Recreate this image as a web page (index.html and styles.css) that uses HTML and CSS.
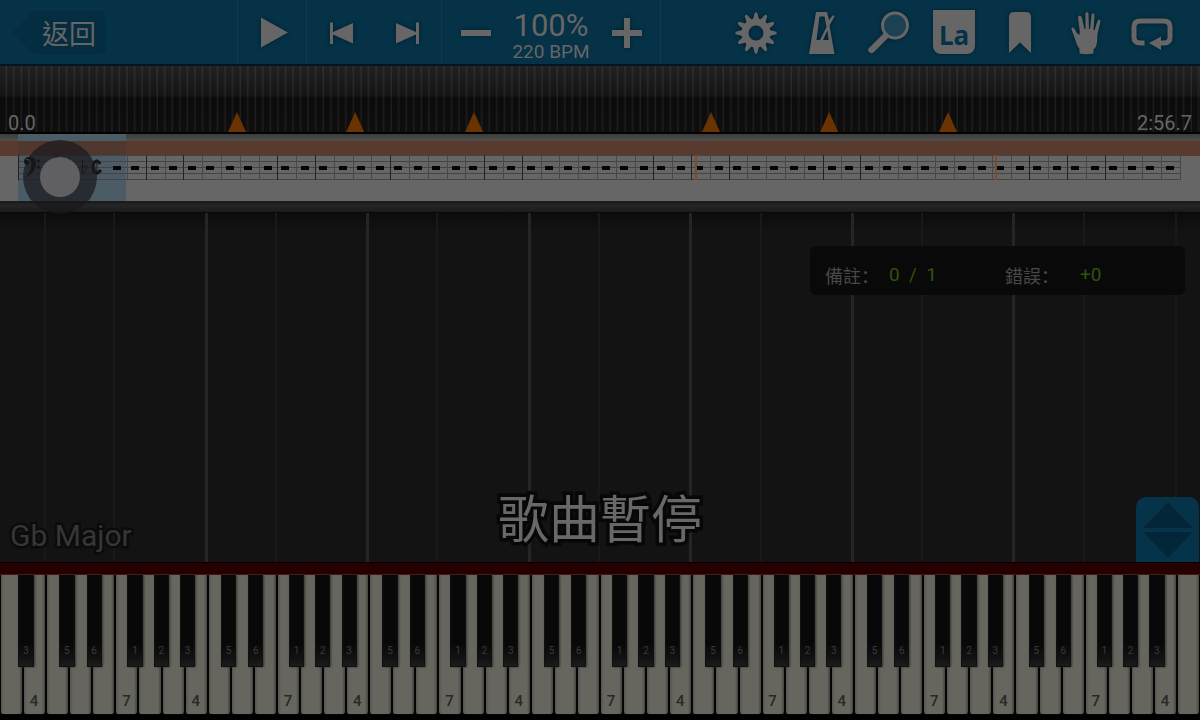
FILE: index.html
```html
<!DOCTYPE html>
<html lang="zh-Hant">
<head>
<meta charset="utf-8">
<meta name="viewport" content="width=device-width, initial-scale=1">
<title>Gb Major</title>
<link rel="stylesheet" href="styles.css">
</head>
<body>
<div class="app">
  <header class="toolbar">
    <div class="group group-back">
      <button class="back" type="button">
        <svg class="back-shape" viewBox="0 0 98 48" aria-hidden="true"><path d="M1 23.500 21 3Q23 1 26 1H89Q97 1 97 9V38Q97 46 89 46H26Q23 46 21 44Z"/></svg>
        <span class="back-label">返回</span>
      </button>
    </div>
    <div class="group">
      <button class="tool" type="button" aria-label="播放"><svg class="icon" viewBox="0 0 48 48"><path d="M13 8.500 40 23.500 13 38.500Z"/></svg></button>
    </div>
    <div class="group">
      <button class="tool" type="button" aria-label="上一小節"><svg class="icon" viewBox="0 0 48 48"><path d="M13 13.500h3v9.500L36 14v20.500L16 25.500V35h-3Z"/></svg></button>
      <button class="tool" type="button" aria-label="下一小節"><svg class="icon" viewBox="0 0 48 48"><path d="M35 13.500h-3v9.500L12 14v20.500l20-9V35h3Z"/></svg></button>
    </div>
    <div class="group tempo">
      <button class="tool" type="button" aria-label="減慢"><svg class="icon" viewBox="0 0 48 48"><path d="M10 21h30v6H10Z"/></svg></button>
      <div class="tempo-text"><span class="percent">100%</span><span class="bpm">220 BPM</span></div>
      <button class="tool" type="button" aria-label="加快"><svg class="icon" viewBox="0 0 48 48"><path d="M21 9h6v12h12v6H27v12h-6V27H9v-6h12Z"/></svg></button>
    </div>
    <nav class="group tools">
      <button class="tool" type="button" aria-label="設定"><svg class="icon" viewBox="0 0 48 48"><g id="teeth"><path id="tooth" d="M20.800 11 22.700 4Q24 2.500 25.300 4L27.200 11Z"/><use href="#tooth" transform="rotate(30 24 24)"/><use href="#tooth" transform="rotate(60 24 24)"/></g><use href="#teeth" transform="rotate(90 24 24)"/><use href="#teeth" transform="rotate(180 24 24)"/><use href="#teeth" transform="rotate(270 24 24)"/><path fill-rule="evenodd" d="M24 9.500a14.500 14.500 0 1 0 0 29 14.500 14.500 0 0 0 0-29Zm0 7a7.500 7.500 0 1 1 0 15 7.500 7.500 0 0 1 0-15Z"/></svg></button>
      <button class="tool" type="button" aria-label="節拍器"><svg class="icon" viewBox="0 0 48 48"><path fill-rule="evenodd" d="M18 3h11l2 8 4-5 1.500 1.500-5 9L36.500 45H11Zm3.500 4.500L18.500 31h3.500l6.500-13-2-10.500Zm8 14L25 31h5.500Z"/></svg></button>
      <button class="tool" type="button" aria-label="放大"><svg class="icon icon-lens" viewBox="0 0 48 48"><circle class="lens" cx="29" cy="16.500" r="12.500"/><path d="m18 24 4.500 4.500L7.500 43.500Q5 45 3 43T3 39Z"/></svg></button>
      <button class="tool" type="button" aria-label="音名"><span class="la">La</span></button>
      <button class="tool" type="button" aria-label="書籤"><svg class="icon" viewBox="0 0 48 48"><path d="M13 44V8Q13 3 18 3h12q5 0 5 5v36L24 33.500Z"/></svg></button>
      <button class="tool" type="button" aria-label="手"><svg class="icon" viewBox="0 0 48 48"><path d="M17.500 44.500V40q-3-4-4.500-10L9.500 20.500Q9 18 11 18.500q1.500.5 3.500 5l3 2.500.2-4-1.700-13q0-2.500 1.500-2.500T20 9l2.500 11h1L23.400 5q.2-2 1.600-2t1.500 2l.5 15h1L29.500 6q.5-2 1.800-1.700T32.500 7l-1 14h1l3-9q.7-2 2-1.500t.8 3L35.500 25 35 34q-.5 4-3.500 6.500v4Q24 46 17.500 44.500Z"/></svg></button>
      <button class="tool" type="button" aria-label="循環"><svg class="icon" viewBox="0 0 48 48"><path class="loop" d="M16.500 34H12Q6 34 6 28V18Q6 12 12 12H36Q42 12 42 18V28Q42 34 36 34H32"/><path d="M21 34 33 27.500V41Z"/></svg></button>
    </nav>
  </header>

  <section class="timeline" aria-label="時間軸">
    <span class="time">0.0</span>
    <span class="time">2:56.7</span>
    <i class="marker" style="left:19.75%"></i>
    <i class="marker" style="left:29.6%"></i>
    <i class="marker" style="left:39.5%"></i>
    <i class="marker" style="left:59.25%"></i>
    <i class="marker" style="left:69.1%"></i>
    <i class="marker" style="left:79%"></i>
  </section>

  <section class="sheet" aria-label="樂譜">
    <svg class="score" id="score" viewBox="0 0 1200 67" preserveAspectRatio="none">
      <rect class="current" x="18" y="0" width="108" height="67"/>
      <rect class="loop-band" x="0" y="7" width="1200" height="15"/>
      <rect class="loop-current" x="18" y="7" width="108" height="15"/>
      <g id="staff"></g>
      <g class="ink">
        <path d="M24 27C25 21 36 21 36 29 36 37 30 41 25 44 30 38 32 34 31 28 30 24 27 24 26 26 30 26 30 31 27 31 25 31 24 29 24 27Z"/>
        <circle cx="38.500" cy="27" r="1.500"/><circle cx="38.500" cy="33" r="1.500"/>
        <path class="pen" d="M56 20v16M69 23v16M82.500 26v13.500c8-7 4-10 0-6"/>
        <path class="pen common" d="M100 30c-2-5-7-3-7 3s4 8 8 3"/>
        <path class="pen" d="M97 25v16"/>
      </g>
    </svg>
    <div class="scrubber"></div>
  </section>
  <div class="ledge"></div>

  <main class="roll">
    <div class="lanes" id="lanes"></div>
    <dl class="stats">
      <dt lang="zh-Hans">備註：</dt><dd>0  /  1</dd>
      <dt lang="zh-Hans">錯誤：</dt><dd>+0</dd>
    </dl>
    <p class="key-name">Gb Major</p>
    <p class="paused">歌曲暫停</p>
    <button class="resize" type="button" aria-label="調整鍵盤"><svg class="resize-icon" viewBox="0 0 52 58"><path d="M26 1 51 27H1ZM1 31H51L26 57Z"/></svg></button>
  </main>
  <div class="felt"></div>
  <ul class="piano" id="piano" aria-label="鋼琴"></ul>
</div>
<script src="piano.js"></script>
</body>
</html>
```
FILE: styles.css
```css
* { box-sizing: border-box; }
body { margin: 0; background: #000; color: #666; font-family: Roboto, "Noto Sans CJK TC", sans-serif; }
button { margin: 0; padding: 0; border: 0; background: none; color: inherit; font: inherit; cursor: pointer; }
.app { display: flex; flex-direction: column; min-height: 100vh; overflow: hidden; }

.toolbar { display: grid; grid-template-columns: 238px 69px 135px 219px 1fr; height: 66px; background: #053247; border-bottom: 2px solid #021620; }
.group { display: flex; align-items: center; justify-content: space-around; border-right: 1px solid #12394b; padding-top: 2px; }
.group-back { justify-content: flex-start; padding-left: 10px; }
.back { display: grid; align-items: center; width: 98px; height: 48px; }
.back-shape, .back-label { grid-area: 1 / 1; }
.back-shape { width: 98px; height: 48px; fill: #052d41; stroke: #08364b; stroke-width: 1; }
.back-label { padding: 4px 0 0 20px; font-size: 27px; line-height: 32px; }
.tool { display: grid; place-items: center; width: 66px; height: 60px; }
.icon { width: 48px; height: 48px; fill: #666; filter: drop-shadow(0 0 2px #021c29); }
.icon-lens { margin-left: 4px; }
.lens { fill: #1c4054; stroke: #666; stroke-width: 3; }
.loop { fill: none; stroke: #666; stroke-width: 5; }
.la { display: grid; place-items: center; width: 42px; height: 44px; margin-bottom: 2px; padding-top: 6px; background: #666; border-radius: 0 0 8px 8px; color: #053247; font: bold 26px/30px "Noto Sans", sans-serif; box-shadow: 0 0 3px #021c29; }
.tempo-text { display: flex; flex-direction: column; align-items: center; width: 84px; padding-top: 5px; }
.percent { font-size: 31px; line-height: 32px; }
.bpm { font-size: 19px; line-height: 20px; }
.tools { justify-content: flex-end; padding-right: 15px; border-right: 0; }

.timeline { position: relative; display: flex; align-items: flex-end; justify-content: space-between; height: 68px; padding: 0 8px; border-bottom: 2px solid #020202;
  background: repeating-linear-gradient(90deg, transparent 0, transparent calc(100% / 159 - 3px), rgb(255 255 255 / .07) calc(100% / 159 - 1px), transparent calc(100% / 159)), linear-gradient(#212121, #141414 30px, #0b0b0b 31px, #0e0e0e); }
.time { font-size: 20px; line-height: 18px; }
.marker { position: absolute; bottom: 0; width: 18px; height: 20px; margin-left: -9px; background: #6b3300; clip-path: polygon(50% 0, 100% 100%, 0 100%); }

.sheet { position: relative; height: 67px; background: linear-gradient(#3c3c3a, #50504e 7px, #666 8px); }
.score { display: block; width: 100%; height: 67px; }
.current { fill: #4c5c67; }
.loop-band { fill: #593a2e; }
.loop-current { fill: #50382f; }
.line { fill: #444; }
.bar { fill: #484848; }
.bar-strong { fill: #222; }
.rest { fill: #050505; }
.repeat { fill: #7c4c30; }
.ink { fill: #111; }
.pen { fill: none; stroke: #151515; stroke-width: 1; }
.common { stroke-width: 3; }
.scrubber { position: absolute; left: 23px; top: 6px; z-index: 2; width: 74px; height: 74px; border: 17px solid rgb(24 24 29 / .7); border-radius: 50%; background: #606063; background-clip: padding-box; }
.ledge { height: 12px; background: linear-gradient(#171918, #242524 4px, #1b1b1b); border-bottom: 1px solid #080808; }

.roll { position: relative; flex: 1; display: grid; grid-template-columns: 1fr auto 1fr; align-items: end; min-height: 250px; background: linear-gradient(#0c0c0c, #131313 20px); }
.lanes { position: absolute; inset: 0; }
.lane { position: absolute; top: 0; bottom: 0; width: 2px; margin-left: -2px; background: #191919; }
.lane-octave { width: 3px; margin-left: -3px; background: #252525; }
.stats { position: absolute; top: 33px; right: 15px; display: grid; grid-template-columns: 64px 116px 75px 1fr; align-items: center; width: 375px; height: 49px; margin: 0; padding: 9px 0 0 15px; border-radius: 6px; background: #090909; font-size: 18px; line-height: 24px; color: #484848; }
.stats dt { font-family: "Noto Sans CJK SC", sans-serif; }
.stats dd { margin: 0; color: #31510f; font-size: 19px; white-space: pre; }
.key-name { position: relative; margin: 0; padding: 0 0 9px 10px; font-size: 30px; line-height: 34px; color: #363636; -webkit-text-stroke: 5px #0b0b0b; paint-order: stroke fill; }
.paused { position: relative; margin: 0; padding-bottom: 11px; font-size: 51px; line-height: 60px; color: #686868; -webkit-text-stroke: 7px #070707; paint-order: stroke fill; }
.resize { position: relative; justify-self: end; display: grid; place-items: center; width: 63px; height: 65px; margin-right: 1px; border-radius: 10px 10px 0 0; background: #05344a; }
.resize-icon { width: 52px; height: 58px; fill: #032738; }

.felt { height: 13px; background: #260000; border-top: 1px solid #090000; border-bottom: 1px solid #441616; }
.piano { display: flex; height: 145px; margin: 0; padding: 0 0 5px; list-style: none; background: #000; }
.key { position: relative; flex: 1 1 0; min-width: 0; }
.white { display: flex; align-items: flex-end; justify-content: center; width: 100%; height: 140px; padding: 0 1px 3px 0; border: 1px solid #050505; border-top: 0; border-radius: 0 0 3px 3px; background: linear-gradient(90deg, #55544e, #66655e 3px, #66655e calc(100% - 3px), #44433e); color: #282826; font-size: 15px; line-height: 20px; font-weight: 500; }
.black { position: absolute; top: 0; z-index: 1; display: flex; align-items: flex-end; justify-content: center; width: 66%; height: 92px; padding-bottom: 7px; border: 1px solid #101010; border-top: 0; background: linear-gradient(#080808 75%, #111 90%, #1b1b1b); box-shadow: 1px 0 2px #35342f; color: #3a3a3a; font-size: 10px; line-height: 16px; }
.black-c { left: 57%; }
.black-d { left: 75%; }
.black-f { left: 52%; }
.black-g { left: 66%; }
.black-a { left: 80%; }
```
FILE: piano.js
```js
const piano = document.getElementById('piano');
const lanes = document.getElementById('lanes');
const names = ['a', 'b', 'c', 'd', 'e', 'f', 'g'];
const sharps = { c: 5, d: 6, f: 1, g: 2, a: 3 };
const naturals = { b: 4, f: 7 };
const WHITE_KEYS = 52;

for (let i = 0; i < WHITE_KEYS; i++) {
  const name = names[i % 7];
  const key = document.createElement('li');
  key.className = 'key';
  const white = document.createElement('button');
  white.type = 'button';
  white.className = 'white';
  white.setAttribute('aria-label', name.toUpperCase());
  white.textContent = naturals[name] || '';
  key.append(white);
  if (sharps[name] && i < WHITE_KEYS - 1) {
    const black = document.createElement('button');
    black.type = 'button';
    black.className = 'black black-' + name;
    black.textContent = sharps[name];
    key.append(black);
  }
  piano.append(key);

  if (name === 'c' || name === 'f') {
    const lane = document.createElement('i');
    const inner = i > 2 && i < WHITE_KEYS - 1;
    lane.className = name === 'c' && inner ? 'lane lane-octave' : 'lane';
    lane.style.left = (i / WHITE_KEYS * 100) + '%';
    lanes.append(lane);
  }
}

const staff = document.getElementById('staff');
function rect(cls, x, y, width, height) {
  const el = document.createElementNS('http://www.w3.org/2000/svg', 'rect');
  el.setAttribute('class', cls);
  Object.entries({ x, y, width, height }).forEach(([k, v]) => el.setAttribute(k, v));
  staff.append(el);
}
for (let n = 0; n < 5; n++) rect('line', 18, 21 + n * 6, 1162, 1);
rect('bar-strong', 18, 21, 1, 25);
rect('rest', 113, 32, 8, 4);
const strong = [1, 3, 8, 10, 14, 19, 21, 28, 30, 32, 37, 39, 48, 50, 52];
for (let m = 0; m <= 56; m++) {
  const x = Math.round(127 + m * 18.8);
  rect(strong.includes(m) ? 'bar-strong' : 'bar', x, 21, 1, 25);
  if (m < 56) rect('rest', x + (m % 2 ? 5 : 4), 32, 8, 4);
}
rect('repeat', 695, 21, 2, 25);
rect('repeat', 995, 21, 2, 25);
```
